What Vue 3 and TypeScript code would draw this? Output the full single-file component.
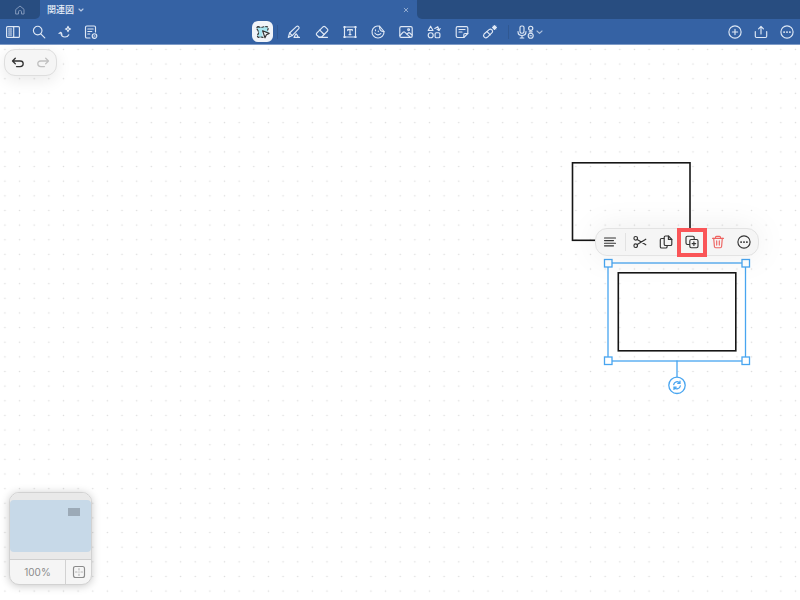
<script setup lang="ts">
import { ref } from 'vue'

interface Tool {
  id: string
  label: string
  paths: string[]
}

const sideTools: Tool[] = [
  {
    id: 'sidebar',
    label: 'サイドバー',
    paths: ['M2.6 2.6h10.8q1 0 1 1v8.8q0 1-1 1H2.6q-1 0-1-1V3.6q0-1 1-1z', 'M8.7 2.6v10.8', 'M3.6 5h3M3.6 7h3M3.6 9h3M3.6 11h3'],
  },
  { id: 'search', label: '検索', paths: ['M11 6.6a4.3 4.3 0 1 1-8.6 0a4.3 4.3 0 1 1 8.6 0z', 'M9.8 9.8l4 4'] },
  {
    id: 'assist',
    label: 'アシスト',
    paths: ['M2 9.5l1.8-1.2l1.2 1.9', 'M3.8 8.6c.3 2.6 2 4.400 4.200 4.400c1.900 0 3.200-.8 3.800-2.200', 'M11 2.400q.3 2.300 2.600 2.600q-2.300.3-2.600 2.600q-.3-2.300-2.600-2.600q2.300-.3 2.600-2.600z'],
  },
  {
    id: 'page',
    label: 'ページ設定',
    paths: ['M7 14H3.800q-1.300 0-1.300-1.300V3.300Q2.500 2 3.800 2h7.400q1.300 0 1.300 1.300V8', 'M4.800 5h5.400M4.800 7.500h4M4.800 10h2', 'M13.800 12a2.300 2.300 0 1 1-4.600 0a2.300 2.300 0 1 1 4.600 0z', 'M11 12h1'],
  },
]

const drawTools: Tool[] = [
  { id: 'pen', label: 'ペン', paths: ['M3.600 9L10.600 2.400q1-.8 2 .2t.2 2.100L6.200 11.600l-3.900 1.900z', 'M3.600 9L6.200 11.600', 'M8 13.400l1.600-3.200q.5-.8 1 0l1.800 3.200M8 13.400h5.500'] },
  { id: 'eraser', label: '消しゴム', paths: ['M2.700 9.200l6.500-6.500q.9-.8 1.800 0l2.500 2.500q.8.900 0 1.800L7.700 13H4.900L2.700 11q-.8-.9 0-1.800z', 'M5.800 6.100l4.400 4.400', 'M4.900 13.300h8.600'] },
  { id: 'text', label: 'テキスト', paths: ['M2.500 3h11v10h-11z', 'M5.700 6.600V5.600h4.600v1M8 5.600v5M7 10.600h2', 'M2 2.500h1v1H2zM13 2.500h1v1h-1zM2 12.500h1v1H2zM13 12.500h1v1h-1z'] },
  { id: 'sticker', label: 'ステッカー', paths: ['M9.500 2.200A6 6 0 1 0 14 7.500', 'M9.500 2.200L14 7.500q-4.600.5-4.500-5.300z', 'M4.800 9q2.800 3.400 6 .6', 'M5.500 5.700v1M8.300 7v.6'] },
  { id: 'image', label: '画像', paths: ['M3.200 2.600h9.600q1.400 0 1.400 1.400v8q0 1.400-1.400 1.400H3.200q-1.400 0-1.400-1.400V4q0-1.400 1.400-1.400z', 'M2 11.500l3.200-3.300q.8-.7 1.500 0l5.400 5', 'M9 10.200l1.300-1.200q.7-.6 1.400 0l2.300 2', 'M11.500 5.800a.9.900 0 1 1-1.800 0a.9.900 0 1 1 1.800 0z'] },
  { id: 'shape', label: '図形', paths: ['M4.600 2.200L7 6.500H2.200z', 'M7.200 11.200a2.500 2.500 0 1 1-5 0a2.500 2.500 0 1 1 5 0z', 'M10.400 8.700h2.200q1.300 0 1.300 1.300v2.400q0 1.300-1.300 1.300h-2.200q-1.300 0-1.300-1.300V10q0-1.300 1.300-1.300z', 'M8.800 4.500l3-1.800l1.200 3.600', 'M11 5.300l2 1.200l1.200-2'] },
  { id: 'note', label: '付箋', paths: ['M9.800 13.500H3.600q-1.400 0-1.400-1.400V4q0-1.400 1.400-1.400h8.800q1.400 0 1.400 1.400v5.500z', 'M9.800 13.500v-2.800q0-1.200 1.200-1.200h2.800', 'M5 5.500h6M5 8h3'] },
  { id: 'laser', label: 'レーザーポインター', paths: ['M2.100 10L7.400 5.400q1.200-.8 2.500.4t.4 2.600L5.300 13.300q-1.500 1.200-3 -.2t-.2-3.100z', 'M5 7.600l3.200 3.200', 'M12.500 1.500v4M10.500 3.500h4M11.100 2.100l2.800 2.800M13.900 2.100l-2.800 2.800'] },
]

const shareTools: Tool[] = [
  { id: 'add', label: '追加', paths: ['M14.100 8a6.100 6.100 0 1 1-12.200 0a6.100 6.100 0 1 1 12.200 0z', 'M8 5.400v5.200M5.400 8h5.200'] },
  { id: 'share', label: '共有', paths: ['M8 10V2.500M5.600 4.800L8 2.400l2.400 2.400', 'M2.300 7.500v4.800q0 1.200 1.200 1.200h9q1.200 0 1.200-1.200V7.500'] },
  { id: 'more', label: 'その他', paths: ['M14.100 8a6.100 6.100 0 1 1-12.200 0a6.100 6.100 0 1 1 12.200 0z', 'M4.800 7.700h.6v.6h-.6zM7.700 7.700h.6v.6h-.6zM10.600 7.700h.6v.6h-.6z'] },
]

const menuTools: Tool[] = [
  { id: 'cut', label: 'カット', paths: ['M5.500 4.300a1.800 1.800 0 1 1-3.600 0a1.800 1.800 0 1 1 3.600 0z', 'M5.500 11.700a1.800 1.800 0 1 1-3.600 0a1.800 1.800 0 1 1 3.600 0z', 'M5.200 5.400L13.800 10.800M5.200 10.600L13.800 5.200'] },
  { id: 'copy', label: 'コピー', paths: ['M6 4.500H3.600q-1.300 0-1.300 1.300v6.900q0 1.300 1.300 1.300h4.200q1.300 0 1.300-1.300v-1', 'M7.500 2h3l3.300 3.300v4.900q0 1.300-1.300 1.300H7.500q-1.300 0-1.300-1.300V3.300Q6.200 2 7.500 2z', 'M10.400 2v3.400h3.400'] },
  { id: 'duplicate', label: '複製', paths: ['M5.500 10.500H3.400Q2 10.500 2 9.100V3.600q0-1.400 1.400-1.400h5.400q1.400 0 1.400 1.400v1.700', 'M7.200 5.500h5.400q1.400 0 1.400 1.400v5.400q0 1.400-1.400 1.400H7.200q-1.400 0-1.400-1.400V6.900q0-1.400 1.400-1.400z', 'M9.900 7.800v3.600M8.100 9.600h3.600'] },
  { id: 'delete', label: '削除', paths: ['M2.500 4.300h11', 'M5.500 4.200V3.300q0-1 1-1h3q1 0 1 1v.9', 'M3.700 4.300l.7 8.200q.1 1.200 1.300 1.200h4.600q1.200 0 1.300-1.200l.7-8.200', 'M6.700 6.800v4.300M9.300 6.800v4.300'] },
  { id: 'options', label: 'その他の操作', paths: shareTools[2].paths },
]

const activeTool = ref('lasso')
</script>

<template>
  <div class="app">
    <header>
      <nav class="tabs" aria-label="タブ">
        <button class="home" aria-label="ホーム">
          <svg viewBox="0 0 10 10" width="10" height="10"><path d="M1 4.300L5 1l4 3.300V9H6.500V6.500q0-.8-.7-.8H4.200q-.7 0-.7.800V9H1z" /></svg>
        </button>
        <div class="tab">
          <button class="title">
            関連図
            <svg viewBox="0 0 6 6" width="6" height="6"><path d="M1 2l2 2l2-2" /></svg>
          </button>
          <button class="close" aria-label="閉じる">
            <svg viewBox="0 0 6 6" width="6" height="6"><path d="M1.200 1.200l3.600 3.600M4.800 1.200L1.200 4.800" /></svg>
          </button>
        </div>
        <div class="rest"></div>
      </nav>
      <div class="toolbar">
        <div class="group">
          <button v-for="t in sideTools" :key="t.id" class="side" :aria-label="t.label">
            <svg class="icon" viewBox="0 0 16 16"><path v-for="d in t.paths" :key="d" :d="d" /></svg>
          </button>
        </div>
        <div class="group">
          <button class="lasso" :class="{ active: activeTool === 'lasso' }" aria-label="なげなわ" @click="activeTool = 'lasso'">
            <svg class="icon" viewBox="0 0 16 16">
              <path class="area" d="M3 2.600q2.500 1.200 5 .4t4.500-.2q1.200 1.200.2 3.200L13.500 8L7 7.500l.8 6q-2.500-.8-4.600-.2q-1.500-1-.2-3T2.600 6T3 2.600z" />
              <path class="dash" d="M3 2.600q2.500 1.200 5 .4t4.500-.2q1.200 1.200.2 3.200M8 13.300q-2.500-.6-4.800 0q-1.500-1-.2-3T2.600 6T3 2.600" />
              <path class="cursor" d="M7.600 6.800l6.600 2.600l-2.800 1.400L10 13.800z" />
            </svg>
          </button>
          <span class="rule"></span>
          <button v-for="t in drawTools" :key="t.id" class="tool" :aria-label="t.label" @click="activeTool = t.id">
            <svg class="icon" viewBox="0 0 16 16"><path v-for="d in t.paths" :key="d" :d="d" /></svg>
          </button>
          <span class="rule"></span>
          <button class="mic" aria-label="録音">
            <svg viewBox="0 0 28 16" width="28" height="16">
              <path d="M5.600 2h.8q1.600 0 1.600 1.600v4q0 1.600-1.600 1.600h-.8Q4 9.200 4 7.600v-4Q4 2 5.600 2z" />
              <path d="M2 7.500q0 4 4 4t4-4M6 11.500V14M4.200 14h3.600" />
              <path d="M16.800 4.300a2.100 2.100 0 1 1-4.200 0a2.100 2.100 0 1 1 4.200 0zM13.200 7.800h3M17.200 11.700a2.500 2.500 0 1 1-5 0a2.500 2.500 0 1 1 5 0zM14 11.700h1.400" />
              <path class="thin" d="M21 7l2.500 2.300L26 7" />
            </svg>
          </button>
        </div>
        <div class="group end">
          <button v-for="t in shareTools" :key="t.id" class="side" :aria-label="t.label">
            <svg class="icon" viewBox="0 0 16 16"><path v-for="d in t.paths" :key="d" :d="d" /></svg>
          </button>
        </div>
      </div>
    </header>

    <main class="board">
      <svg class="drawing" aria-hidden="true">
        <defs>
          <pattern id="dots" width="14.640" height="14.640" x="-2.400" y="-1.900" patternUnits="userSpaceOnUse">
            <circle cx="7.320" cy="7.320" r="0.800" />
          </pattern>
        </defs>
        <rect class="paper" width="100%" height="100%" fill="url(#dots)" />
        <rect class="shape" x="572.500" y="118.800" width="117.500" height="77.500" />
        <rect class="shape" x="618.300" y="228.800" width="117.500" height="78" />
        <g class="selection">
          <rect x="608" y="219" width="137.500" height="98" />
          <path d="M677 317v16" />
          <rect class="handle" x="604.500" y="215.500" width="7.500" height="7.500" />
          <rect class="handle" x="742" y="215.500" width="7.500" height="7.500" />
          <rect class="handle" x="604.500" y="313" width="7.500" height="7.500" />
          <rect class="handle" x="742" y="313" width="7.500" height="7.500" />
          <circle class="handle" cx="677" cy="341.300" r="8.200" />
          <path d="M673.700 340.600a3.400 3.400 0 0 1 6-1.600M680.300 342a3.400 3.400 0 0 1-6 1.600M680 337.200v2.200h-2.200M674 345.400v-2.200h2.200" />
        </g>
      </svg>

      <div class="history panel">
        <button aria-label="元に戻す">
          <svg viewBox="0 0 14 12" width="14" height="12"><path d="M4.300 1.300L1.500 4l2.800 2.700M1.800 4h7.400q3 0 3 2.800t-3 2.800H5.500" /></svg>
        </button>
        <button class="off" aria-label="やり直し" disabled>
          <svg viewBox="0 0 14 12" width="14" height="12"><path d="M9.700 1.300L12.500 4L9.700 6.700M12.200 4H4.800q-3 0-3 2.800t3 2.800h3.700" /></svg>
        </button>
      </div>

      <div class="menu panel">
        <button class="align" aria-label="配置">
          <svg class="icon" viewBox="0 0 16 16"><path d="M2.500 4h11M2.500 6.600h9M2.500 9.200h11M2.500 11.800h9" /></svg>
        </button>
        <span class="rule"></span>
        <button v-for="t in menuTools" :key="t.id" :class="t.id" :aria-label="t.label">
          <svg class="icon" viewBox="0 0 16 16"><path v-for="d in t.paths" :key="d" :d="d" /></svg>
        </button>
      </div>

      <section class="minimap panel" aria-label="ミニマップ">
        <div class="overview">
          <div class="sheet"><div class="viewport"></div></div>
        </div>
        <div class="zoom">
          <button class="level">100%</button>
          <button class="fit" aria-label="全体を表示">
            <svg viewBox="0 0 14 14" width="14" height="14">
              <path d="M3.500 1.500h7q2 0 2 2v7q0 2-2 2h-7q-2 0-2-2v-7q0-2 2-2z" />
              <path class="fine" d="M7 3.500v1.500M7 6.800v.4M7 9v1.500M3.500 7H5M9 7h1.500" />
            </svg>
          </button>
        </div>
      </section>
    </main>
  </div>
</template>

<style>
body {
  margin: 0;
}
</style>

<style scoped>
.app {
  display: flex;
  flex-direction: column;
  min-height: 100vh;
  font-family: Inter, "Noto Sans CJK JP", sans-serif;
  background: #fff;
}
button {
  display: flex;
  align-items: center;
  justify-content: center;
  padding: 0;
  border: 0;
  background: none;
  color: inherit;
  font: inherit;
}
svg {
  flex: none;
  fill: none;
  stroke: currentColor;
  stroke-width: 1.15;
  stroke-linecap: round;
  stroke-linejoin: round;
}
.icon {
  width: 16px;
  height: 16px;
}
header {
  background: #3562a4;
  color: #dfe8f5;
}
.tabs {
  display: flex;
  height: 19px;
  background: #3562a4;
}
.home {
  width: 40px;
  background: #284d80;
  border-bottom-right-radius: 5px;
  color: #8198bb;
}
.home svg {
  stroke-width: 1;
}
.tab {
  box-sizing: border-box;
  flex: 0 1 377px;
  display: flex;
  justify-content: space-between;
  padding: 0 8px 0 7px;
  background: #3562a4;
  border-top-right-radius: 5px;
}
.title {
  gap: 4px;
  font-size: 9px;
  font-weight: 500;
  line-height: 19px;
  color: #e6edf7;
}
.title svg {
  color: #b9cae4;
}
.close {
  color: #a9bedc;
}
.close svg {
  stroke-width: 0.8;
}
.rest {
  flex: 1;
  background: #284d80;
  border-bottom-left-radius: 5px;
}
.toolbar {
  display: grid;
  grid-template-columns: 1fr auto 1fr;
  height: 25px;
  border-bottom: 1px solid #7f9cc8;
  margin-bottom: -1px;
}
.group {
  display: flex;
  align-items: center;
}
.end {
  justify-content: flex-end;
}
.side {
  width: 26px;
  height: 24px;
}
.tool {
  width: 28px;
  height: 24px;
}
.mic {
  width: 37px;
  height: 24px;
}
.thin {
  opacity: 0.7;
}
.lasso {
  width: 21px;
  height: 21px;
  border-radius: 6px;
}
.lasso.active {
  background: #f1f4f9;
  color: #333;
}
.area {
  fill: #a9e6f2;
  stroke: none;
}
.dash {
  stroke-width: 1.2;
  stroke-dasharray: 2 1.8;
}
.cursor {
  fill: #f1f4f9;
}
.rule {
  width: 1px;
  height: 14px;
  margin: 0 2px 0 4px;
  background: #305892;
}
.board {
  position: relative;
  flex: 1;
  overflow: hidden;
  color: #333;
}
.drawing {
  position: absolute;
  inset: 0;
  width: 100%;
  height: 100%;
}
.drawing pattern circle {
  fill: #dcdcdc;
  stroke: none;
}
.paper {
  stroke: none;
}
.shape {
  stroke: #161616;
  stroke-width: 1.6;
  stroke-linejoin: miter;
}
.selection {
  stroke: #48a5f0;
  stroke-width: 1.3;
  stroke-linejoin: miter;
}
.handle {
  fill: #fff;
}
.panel {
  position: absolute;
  box-sizing: border-box;
  display: flex;
  border: 1px solid #dedede;
  background: #f5f5f5;
}
.history {
  top: 5px;
  left: 4px;
  width: 53px;
  height: 27px;
  border-radius: 11px;
  box-shadow: 0 4px 16px rgba(0, 0, 0, 0.09);
}
.history button {
  flex: 1;
}
.history svg {
  stroke-width: 1.3;
}
.history .off {
  color: #c0c0c0;
}
.menu {
  top: 184px;
  left: 595px;
  height: 28px;
  align-items: center;
  padding-right: 1px;
  border-color: #e3e3e3;
  border-radius: 12px;
  box-shadow: 0 0 32px rgba(0, 0, 0, 0.08);
}
.menu button {
  width: 26px;
  height: 26px;
}
.menu .align {
  width: 28px;
}
.menu .rule {
  height: 18px;
  margin: 0 1px;
  background: #e2e2e2;
}
.menu .delete {
  color: #ee6461;
}
.menu .duplicate {
  width: 30px;
  height: 29px;
  box-sizing: border-box;
  margin: 0 -2px;
  border: 4px solid #fa5558;
}
.minimap {
  left: 9px;
  bottom: 15px;
  width: 83px;
  flex-direction: column;
  overflow: hidden;
  border-color: #d2d2d2;
  border-radius: 10px;
  box-shadow: 0 1px 8px rgba(0, 0, 0, 0.22);
}
.overview {
  padding: 7px 0;
  background: #e9e9e9;
  border-bottom: 1px solid #cfcfcf;
}
.sheet {
  display: flex;
  justify-content: flex-end;
  height: 36px;
  padding: 8px 11px;
  border-radius: 4px;
  background: #c7d9e8;
}
.viewport {
  width: 12px;
  height: 8px;
  background: #9caab7;
}
.zoom {
  display: flex;
  height: 24px;
  color: #8b8b8b;
}
.level {
  flex: 1;
  font-size: 10px;
}
.fit {
  width: 26px;
  border-left: 1px solid #d2d2d2;
}
.fine {
  opacity: 0.6;
}
</style>
